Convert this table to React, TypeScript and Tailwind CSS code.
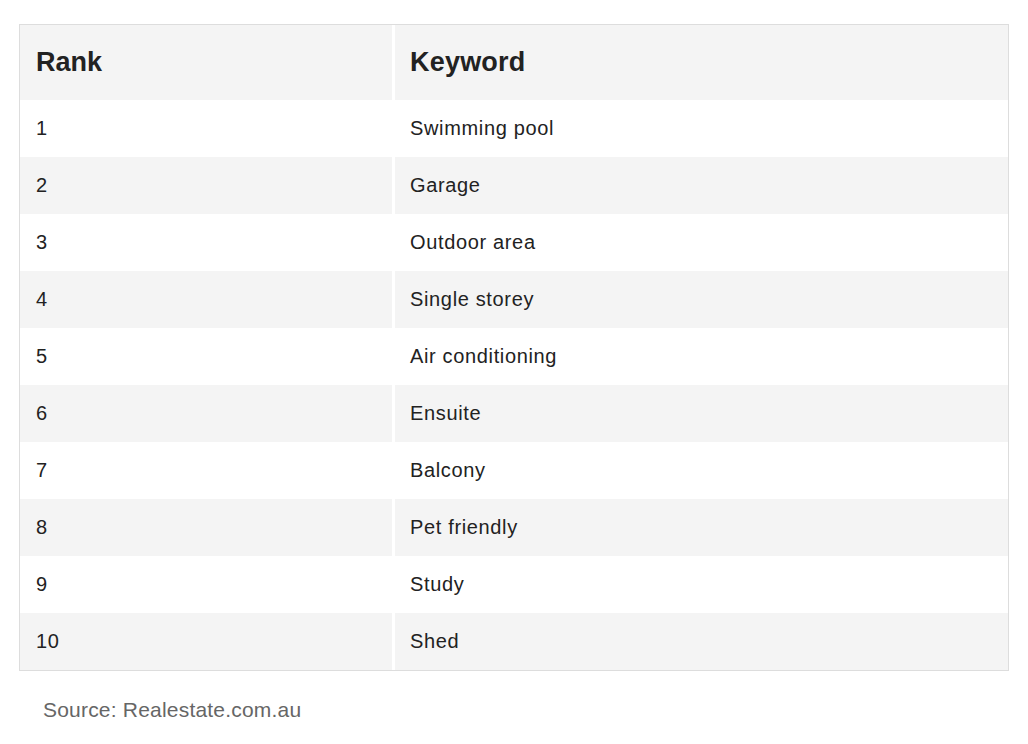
const rows = [
  'Swimming pool',
  'Garage',
  'Outdoor area',
  'Single storey',
  'Air conditioning',
  'Ensuite',
  'Balcony',
  'Pet friendly',
  'Study',
  'Shed',
];

const App = () => {
  return (
    <div className="min-h-screen bg-white pl-[19px] pt-[24px] font-['Liberation_Sans',Arial,sans-serif] text-[#222]">
      {/* Table */}
      <div className="w-[990px] border border-[#dddddd]">
        <div className="grid grid-cols-[372px_613px] gap-x-[3px] h-[75px]">
          <div className="bg-[#f4f4f4] flex items-center pl-4 text-[27px] font-bold">Rank</div>
          <div className="bg-[#f4f4f4] flex items-center pl-[15px] text-[27px] font-bold tracking-[0.2px]">Keyword</div>
        </div>
        {rows.map((keyword, i) => (
          <div
            key={keyword}
            className="grid grid-cols-[372px_613px] gap-x-[3px] h-[57px] text-[20px] tracking-[0.65px]"
          >
            <div className={`flex items-center pl-4 pb-px ${i % 2 === 1 ? 'bg-[#f4f4f4]' : 'bg-white'}`}>{i + 1}</div>
            <div className={`flex items-center pl-[15px] pb-px ${i % 2 === 1 ? 'bg-[#f4f4f4]' : 'bg-white'}`}>{keyword}</div>
          </div>
        ))}
      </div>

      {/* Source */}
      <p className="mt-[24px] pl-[24px] text-[21px] leading-[30px] tracking-[0.2px] text-[#666]">Source: Realestate.com.au</p>
    </div>
  );
};

export default App;
